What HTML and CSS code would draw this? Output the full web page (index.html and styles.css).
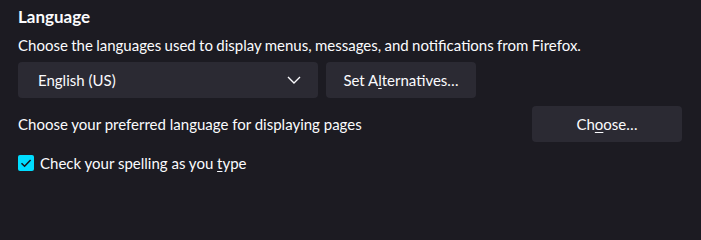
FILE: index.html
```html
<!DOCTYPE html>
<html>
<head>
<meta charset="utf-8">
<link rel="stylesheet" href="styles.css">
</head>
<body>
<section class="pane">
  <h2 class="title">Language</h2>
  <p class="desc">Choose the languages used to display menus, messages, and notifications from Firefox.</p>
  <div class="row">
    <div class="select">
      <span>English (US)</span>
      <svg class="chev" width="14" height="8" viewBox="0 0 14 8"><path d="M1 1 L7 7 L13 1" fill="none" stroke="#fbfbfe" stroke-width="1.4"/></svg>
    </div>
    <button class="btn">Set A<u>l</u>ternatives…</button>
  </div>
  <div class="row between">
    <span class="label">Choose your preferred language for displaying pages</span>
    <button class="btn">Ch<u>o</u>ose…</button>
  </div>
  <label class="check">
    <span class="box"><svg width="16" height="16" viewBox="0 0 16 16"><path d="M3.5 8.2 L6.6 11.2 L12.6 5" fill="none" stroke="#15141a" stroke-width="1.6"/></svg></span>
    <span>Check your spelling as you <u>t</u>ype</span>
  </label>
</section>
</body>
</html>
```
FILE: styles.css
```css
html, body {
  margin: 0;
  padding: 0;
  background: #1c1b22;
  color: #fbfbfe;
  font-family: Lato, "Noto Sans", sans-serif;
  font-size: 15px;
}
.pane {
  width: 664px;
  padding: 4px 19px 0 18px;
}
.title {
  margin: 0;
  font-size: 17px;
  font-weight: 700;
  line-height: 26px;
}
.desc {
  margin: 4px 0 0;
  line-height: 22px;
  word-spacing: -0.5px;
}
.row {
  display: flex;
  align-items: center;
  gap: 8px;
  margin-top: 6px;
}
.between {
  justify-content: space-between;
  margin-top: 8px;
}
.select {
  width: 300px;
  height: 36px;
  box-sizing: border-box;
  background: #2b2a33;
  border-radius: 4px;
  display: flex;
  align-items: center;
  justify-content: space-between;
  padding: 0 17px 0 20px;
}
.btn {
  width: 150px;
  height: 36px;
  background: #2b2a33;
  color: #fbfbfe;
  border: none;
  border-radius: 4px;
  font: inherit;
  padding: 0;
}
.check {
  display: flex;
  align-items: center;
  gap: 6px;
  margin-top: 12px;
}
.box {
  width: 16px;
  height: 16px;
  background: #00ddff;
  border-radius: 2px;
  display: block;
}
.box svg { display: block; }
u { text-underline-offset: 2px; }
```
